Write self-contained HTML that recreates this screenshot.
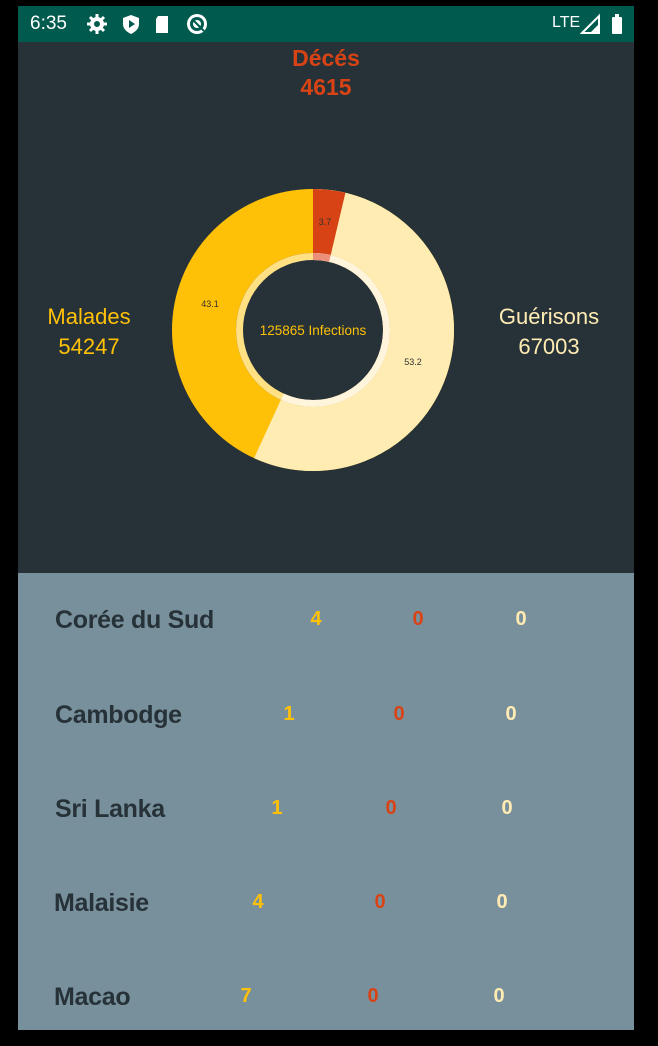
<!DOCTYPE html>
<html><head><meta charset="utf-8"><style>
html,body{margin:0;padding:0;width:658px;height:1046px;background:#000;overflow:hidden;font-family:"Liberation Sans",sans-serif}
.abs{position:absolute}
.c{transform:translateX(-50%);white-space:nowrap}
.name{color:#263238;font-size:25px;font-weight:bold;letter-spacing:-0.3px}
.n{font-size:20px;font-weight:bold}
</style></head><body>
<div class="abs" style="left:18px;top:6px;width:616px;height:36px;background:#005a4e"></div>
<div class="abs" style="left:30px;top:13px;color:#fff;font-size:19px">6:35</div>
<svg class="abs" style="left:86px;top:12px" width="130" height="24" viewBox="0 0 130 24">
<g fill="#fff">
<circle cx="11" cy="12" r="7"/><g stroke="#fff" stroke-width="3"><line x1="11" y1="2" x2="11" y2="22"/><line x1="1" y1="12" x2="21" y2="12"/><line x1="4" y1="5" x2="18" y2="19"/><line x1="18" y1="5" x2="4" y2="19"/></g><circle cx="11" cy="12" r="3" fill="#005a4e"/>
<path d="M45 3 L53 6 V12 C53 17 49 20 45 22 C41 20 37 17 37 12 V6 Z"/><path d="M43 8 L49 12 L43 16Z" fill="#005a4e"/>
<path d="M72 4 H82 V21 H70 V7 Z"/>
<circle cx="111" cy="12" r="10"/><circle cx="111" cy="12" r="7" fill="#005a4e"/><circle cx="111" cy="12" r="4"/><line x1="106" y1="7" x2="118" y2="19" stroke="#005a4e" stroke-width="2"/>
</g></svg>
<div class="abs" style="left:552px;top:14px;color:#fff;font-size:16px">LTE</div>
<svg class="abs" style="left:580px;top:12px" width="50" height="24"><path d="M2 21 L19 4 V21Z" fill="none" stroke="#fff" stroke-width="2"/><path d="M10 21 L19 12 V21Z" fill="#fff"/><rect x="32" y="5" width="10" height="17" rx="1" fill="#fff"/><rect x="35" y="2" width="4" height="4" fill="#fff"/></svg>

<div class="abs" style="left:18px;top:42px;width:616px;height:531px;background:#263238"></div>
<div class="abs c" style="left:326px;top:45px;color:#d84315;font-size:23px;font-weight:bold">Décés</div>
<div class="abs c" style="left:326px;top:74px;color:#d84315;font-size:23px;font-weight:bold">4615</div>
<div class="abs c" style="left:89px;top:304px;color:#ffc107;font-size:22px">Malades</div>
<div class="abs c" style="left:89px;top:334px;color:#ffc107;font-size:22px">54247</div>
<div class="abs c" style="left:549px;top:304px;color:#ffecb3;font-size:22px">Guérisons</div>
<div class="abs c" style="left:549px;top:334px;color:#ffecb3;font-size:22px">67003</div>

<svg class="abs" style="left:0;top:0" width="658" height="600">
<g transform="rotate(-90 313 330)">
<circle cx="313" cy="330" r="109" fill="none" stroke="#ffc107" stroke-width="64"/>
<circle cx="313" cy="330" r="109" fill="none" stroke="#ffecb3" stroke-width="64" pathLength="100" stroke-dasharray="56.9 100"/>
<circle cx="313" cy="330" r="109" fill="none" stroke="#d84315" stroke-width="64" pathLength="100" stroke-dasharray="3.7 100"/>
<circle cx="313" cy="330" r="73.5" fill="none" stroke="#ffe082" stroke-width="7"/>
<circle cx="313" cy="330" r="73.5" fill="none" stroke="#fff4dc" stroke-width="7" pathLength="100" stroke-dasharray="56.9 100"/>
<circle cx="313" cy="330" r="73.5" fill="none" stroke="#ec8f7a" stroke-width="7" pathLength="100" stroke-dasharray="3.7 100"/>
</g>
<g font-family="Liberation Sans" font-size="9" fill="#333" text-anchor="middle">
<text x="325" y="225">3.7</text><text x="210" y="307">43.1</text><text x="413" y="365">53.2</text>
</g>
<text x="313" y="335" text-anchor="middle" font-family="Liberation Sans" font-size="13.5" fill="#ffc107">125865 Infections</text>
</svg>

<div class="abs" style="left:18px;top:573px;width:616px;height:457px;background:#78909c"></div>
<div class="abs name" style="left:55px;top:606px">Corée du Sud</div>
<div class="abs n c" style="left:316px;top:608px;color:#ffc107">4</div>
<div class="abs n c" style="left:418px;top:608px;color:#d84315">0</div>
<div class="abs n c" style="left:521px;top:608px;color:#ffecb3">0</div>

<div class="abs name" style="left:55px;top:701px">Cambodge</div>
<div class="abs n c" style="left:289px;top:703px;color:#ffc107">1</div>
<div class="abs n c" style="left:399px;top:703px;color:#d84315">0</div>
<div class="abs n c" style="left:511px;top:703px;color:#ffecb3">0</div>

<div class="abs name" style="left:55px;top:795px">Sri Lanka</div>
<div class="abs n c" style="left:277px;top:797px;color:#ffc107">1</div>
<div class="abs n c" style="left:391px;top:797px;color:#d84315">0</div>
<div class="abs n c" style="left:507px;top:797px;color:#ffecb3">0</div>

<div class="abs name" style="left:54px;top:889px">Malaisie</div>
<div class="abs n c" style="left:258px;top:891px;color:#ffc107">4</div>
<div class="abs n c" style="left:380px;top:891px;color:#d84315">0</div>
<div class="abs n c" style="left:502px;top:891px;color:#ffecb3">0</div>

<div class="abs name" style="left:54px;top:983px">Macao</div>
<div class="abs n c" style="left:246px;top:985px;color:#ffc107">7</div>
<div class="abs n c" style="left:373px;top:985px;color:#d84315">0</div>
<div class="abs n c" style="left:499px;top:985px;color:#ffecb3">0</div>
</body></html>
